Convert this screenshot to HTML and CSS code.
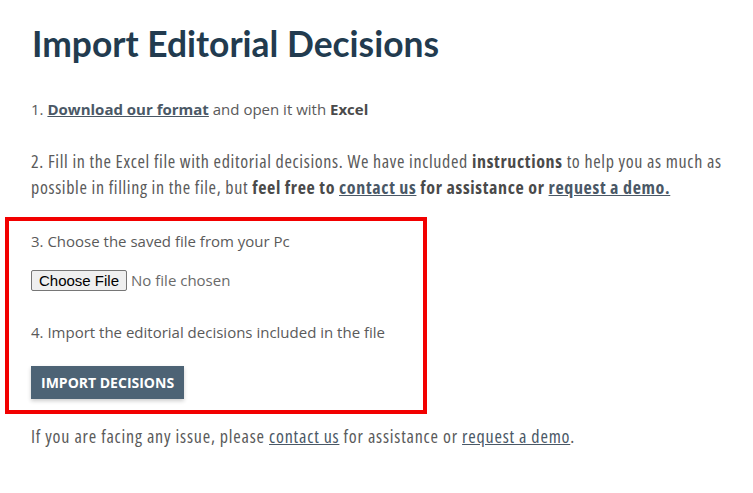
FILE: index.html
```html
<!DOCTYPE html>
<html>
  <head>
    <meta charset="utf-8">
    <link rel="stylesheet" href="styles.css">
    <title>Import Editorial Decisions</title>
  </head>
  <body>
    <div class="page">
      <h1>Import Editorial Decisions</h1>

      <p class="step-1">1. <a href="#" class="strong">Download our format</a> and open it with <b>Excel</b></p>

      <p class="narrow">2. Fill in the Excel file with editorial decisions. We have included <b>instructions</b> to help you as much as possible in filling in the file, but <b>feel free to <a href="#">contact us</a> for assistance or <a href="#">request a demo.</a></b></p>

      <div class="upload-box">
        <p>3. Choose the saved file from your Pc</p>
        <input type="file" class="file-input">
        <p class="step-4">4. Import the editorial decisions included in the file</p>
        <button class="import-btn">Import Decisions</button>
      </div>

      <p class="narrow help">If you are facing any issue, please <a href="#">contact us</a> for assistance or <a href="#">request a demo</a>.</p>
    </div>
  </body>
</html>
```

FILE: styles.css
```css
* {
  box-sizing: border-box;
}
body {
  margin: 0;
  font-family: "Open Sans", sans-serif;
  font-size: 15px;
  line-height: 26px;
  color: #5a5a5a;
  background-color: #fff;
}
.page {
  padding: 20px 0 0 31px;
  width: 750px;
}
h1 {
  margin: 0 0 28px 1px;
  font-family: Lato, sans-serif;
  font-size: 35.4px;
  line-height: 48px;
  font-weight: 700;
  color: #223b4f;
}
p {
  margin: 0 0 20px;
}
.step-1 {
  margin-bottom: 26px;
}
a {
  color: #4a5866;
}
a.strong {
  font-weight: 700;
}
b {
  color: #4a4a4a;
}
.narrow {
  font-size: 18px;
  font-stretch: 75%;
  letter-spacing: 0.65px;
  margin-bottom: 17px;
}
.help {
  letter-spacing: 0.8px;
}
.upload-box {
  margin: 0 0 9px -26px;
  padding: 7px 22px 11px 22px;
  width: 422px;
  border: 4px solid #f20000;
}
.upload-box p {
  margin-bottom: 16px;
}
.file-input {
  display: block;
  font-family: "Open Sans", sans-serif;
  font-size: 15px;
  color: #6a6a6a;
  margin-bottom: 28px;
}
.file-input::file-selector-button {
  font-family: "Liberation Sans", Arial, sans-serif;
  font-size: 15px;
  padding: 1px 7px;
  margin-right: 4px;
  color: #000;
  background-color: #efefef;
  border: 1px solid #767676;
  border-radius: 2px;
}
.upload-box .step-4 {
  margin-bottom: 21px;
}
.import-btn {
  display: block;
  height: 33px;
  padding: 0 10px;
  font-family: "Open Sans", sans-serif;
  font-size: 14px;
  font-weight: 700;
  text-transform: uppercase;
  color: #fff;
  background-color: #4d6375;
  border: 0;
  box-shadow: 0 2px 4px rgba(0, 0, 0, .2);
}
```
